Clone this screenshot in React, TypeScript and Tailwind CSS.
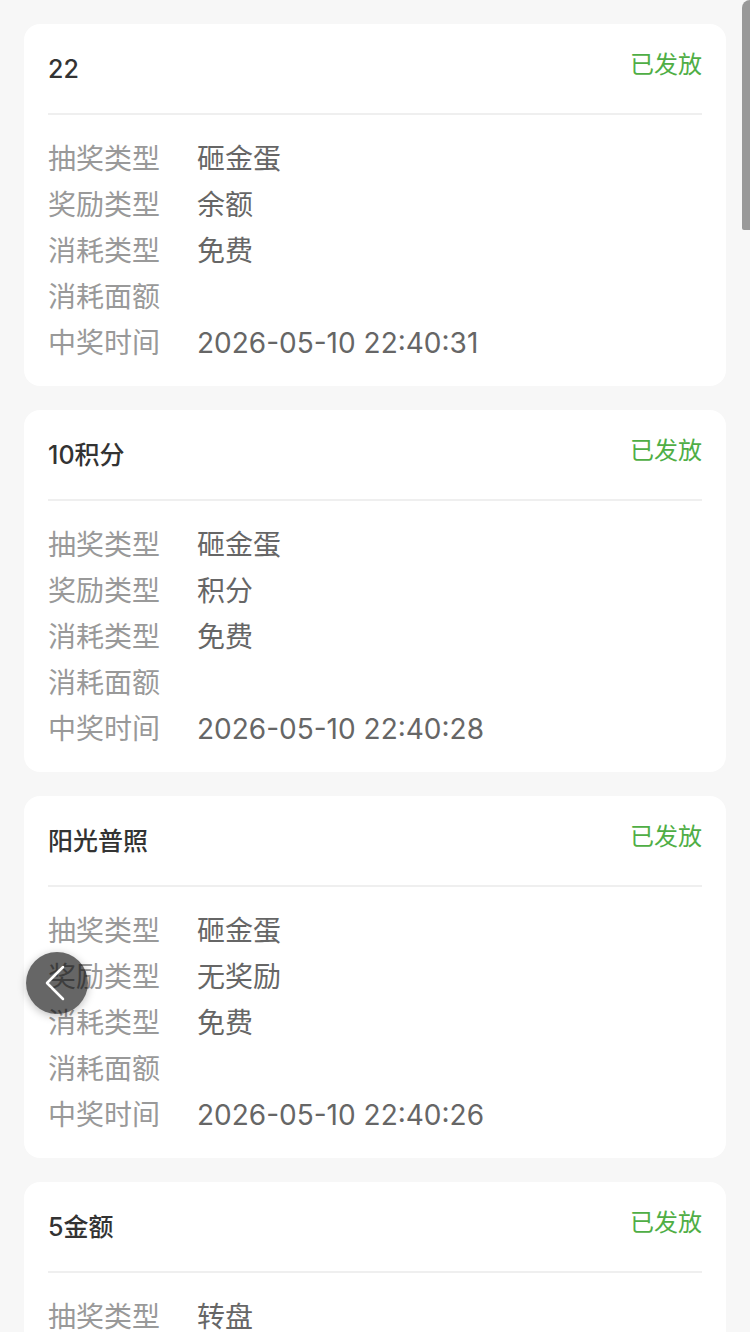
type Record = {
  title: string;
  lottery: string;
  reward: string;
  cost: string;
  amount: string;
  time: string;
};

const records: Record[] = [
  { title: '22', lottery: '砸金蛋', reward: '余额', cost: '免费', amount: '', time: '2026-05-10 22:40:31' },
  { title: '10积分', lottery: '砸金蛋', reward: '积分', cost: '免费', amount: '', time: '2026-05-10 22:40:28' },
  { title: '阳光普照', lottery: '砸金蛋', reward: '无奖励', cost: '免费', amount: '', time: '2026-05-10 22:40:26' },
  { title: '5金额', lottery: '转盘', reward: '余额', cost: '免费', amount: '', time: '2026-05-10 22:40:20' },
];

function Row({ label, value }: { label: string; value: string }) {
  return (
    <div className="flex h-[46px] items-center text-[28px] leading-[46px]">
      <span className="w-[149px] shrink-0 text-[#999]">{label}</span>
      <span className="text-[#666]">{value}</span>
    </div>
  );
}

function RecordCard({ r }: { r: Record }) {
  return (
    <div className="h-[362px] shrink-0 rounded-2xl bg-white px-6">
      <div className="flex items-start justify-between border-b-2 border-[#efefef] pt-[21px] pb-[20px]">
        <span className="text-[25px] font-medium leading-[48px] text-[#333]">{r.title}</span>
        <span className="text-[24px] leading-[40px] text-[#4fae45]">已发放</span>
      </div>
      <div className="pt-[21px]">
        <Row label="抽奖类型" value={r.lottery} />
        <Row label="奖励类型" value={r.reward} />
        <Row label="消耗类型" value={r.cost} />
        <Row label="消耗面额" value={r.amount} />
        <Row label="中奖时间" value={r.time} />
      </div>
    </div>
  );
}

export default function App() {
  return (
    <div
      className="relative h-[1332px] w-[750px] overflow-hidden bg-[#f7f7f7]"
      style={{ fontFamily: 'Inter, "Noto Sans CJK SC", sans-serif' }}
    >
      <div className="flex flex-col gap-6 px-6 pt-6">
        {records.map((r, i) => (
          <RecordCard key={i} r={r} />
        ))}
      </div>

      {/* 返回按钮 */}
      <button className="absolute left-[26px] top-[952px] h-[62px] w-[62px] rounded-full bg-black/60 shadow-[0_2px_8px_rgba(0,0,0,0.25)]">
        <svg width="62" height="62" viewBox="0 0 62 62" fill="none">
          <polyline points="37,15 21,31 37,47" stroke="white" strokeWidth="2.5" strokeLinecap="round" strokeLinejoin="round" />
        </svg>
      </button>

      {/* 滚动条 */}
      <div className="absolute right-0 top-0 h-[230px] w-[8px] rounded-tl-[8px] rounded-bl-[2px] bg-[#999]" />
    </div>
  );
}
